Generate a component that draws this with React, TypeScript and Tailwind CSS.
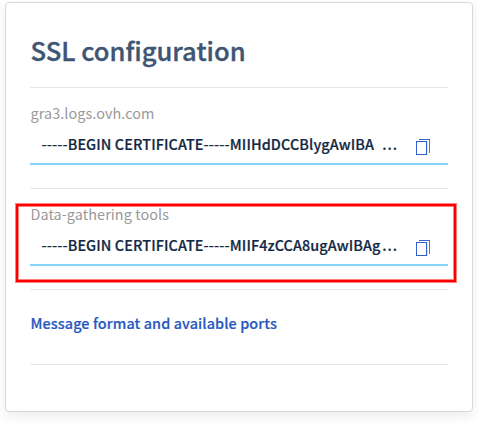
function CopyIcon() {
  return (
    <svg className="mt-2" width="15" height="17" viewBox="0 0 15 17" fill="none" shapeRendering="crispEdges">
      <rect x="0.5" y="2.5" width="10" height="13" stroke="#2f5fd0" />
      <path d="M3 0.5H14" stroke="#3c63c8" />
      <path d="M13.5 1V14" stroke="#5d6fc9" />
      <path d="M11.5 2V16" stroke="#dfe5f8" />
    </svg>
  );
}

function Certificate({ label, value }: { label: string; value: string }) {
  return (
    <section className="h-[101px] border-t border-[#e6e6e6] pt-[15px]">
      <div className="h-5 pl-[0.5px] text-[14.4px] leading-5 tracking-[0.08px] text-[#999]">{label}</div>
      <div className="flex h-[42px] items-center justify-between border-b-2 border-[#85d5f8] pl-[11px] pr-[17px] pt-px">
        <div className="flex w-[357px] justify-between whitespace-nowrap pl-[0.5px] text-[14.4px] font-medium leading-6 tracking-[0.1px] text-[#122844] [-webkit-text-stroke:0.2px_#122844]">
          <span>{value}</span>
          <span className="tracking-[1px]">...</span>
        </div>
        <CopyIcon />
      </div>
    </section>
  );
}

export default function App() {
  return (
    <div className="relative h-[428px] w-[478px] overflow-hidden bg-white pl-[5px] pt-[2px] font-['Noto_Sans_CJK_SC',sans-serif]">
      <main className="h-[410px] w-[468px] rounded-[4px] border border-[#d9d9d9] bg-white px-6 shadow-[0_4px_12px_rgba(0,0,0,0.08)]">
        <h1 className="h-[84px] pl-[0.5px] pt-[31px] text-[25.6px] font-medium leading-8 text-[#405572] [-webkit-text-stroke:0.35px_#405572]">
          SSL configuration
        </h1>
        <div className="w-[418px]">
          <Certificate label="gra3.logs.ovh.com" value="-----BEGIN CERTIFICATE-----MIIHdDCCBlygAwIBA" />
          <Certificate label="Data-gathering tools" value="-----BEGIN CERTIFICATE-----MIIF4zCCA8ugAwIBAg" />
          <div className="h-[76px] border-y border-[#e6e6e6] pl-[0.5px] pt-[21px] text-[14.4px] font-medium leading-6 tracking-[0.1px] text-[#2859c0] [-webkit-text-stroke:0.2px_#2859c0]">
            Message format and available ports
          </div>
        </div>
      </main>
      <div className="absolute left-[15px] top-[203px] h-[80px] w-[442px] border border-[#ff8080]">
        <div className="h-full border-2 border-[#ff0000] outline outline-1 -outline-offset-3 outline-[#ff8080]" />
      </div>
    </div>
  );
}
